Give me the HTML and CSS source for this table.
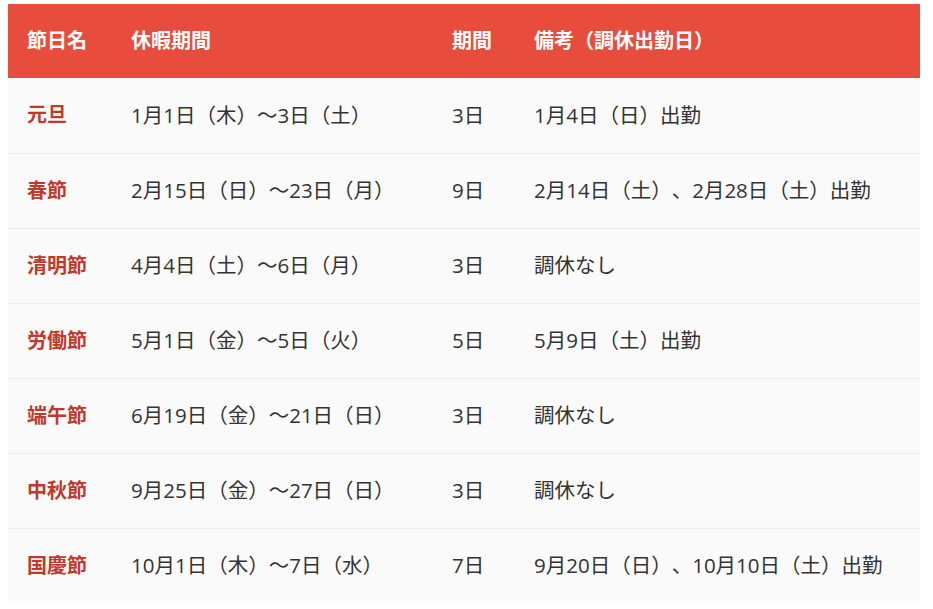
FILE: index.html
```html
<!DOCTYPE html>
<html lang="ja">
<head>
<meta charset="utf-8">
<link rel="stylesheet" href="styles.css">
</head>
<body>
<table class="holidays">
  <colgroup>
    <col class="c-name">
    <col class="c-range">
    <col class="c-days">
    <col class="c-note">
  </colgroup>
  <thead>
    <tr><th>節日名</th><th>休暇期間</th><th>期間</th><th>備考（調休出勤日）</th></tr>
  </thead>
  <tbody>
    <tr><td class="name">元旦</td><td>1月1日（木）～3日（土）</td><td>3日</td><td>1月4日（日）出勤</td></tr>
    <tr><td class="name">春節</td><td>2月15日（日）～23日（月）</td><td>9日</td><td>2月14日（土）、2月28日（土）出勤</td></tr>
    <tr><td class="name">清明節</td><td>4月4日（土）～6日（月）</td><td>3日</td><td>調休なし</td></tr>
    <tr><td class="name">労働節</td><td>5月1日（金）～5日（火）</td><td>5日</td><td>5月9日（土）出勤</td></tr>
    <tr><td class="name">端午節</td><td>6月19日（金）～21日（日）</td><td>3日</td><td>調休なし</td></tr>
    <tr><td class="name">中秋節</td><td>9月25日（金）～27日（日）</td><td>3日</td><td>調休なし</td></tr>
    <tr><td class="name">国慶節</td><td>10月1日（木）～7日（水）</td><td>7日</td><td>9月20日（日）、10月10日（土）出勤</td></tr>
  </tbody>
</table>
</body>
</html>
```
FILE: styles.css
```css
html, body {
  background: #ffffff;
}
body {
  margin: 4px 13px 8px 8px;
  font-family: "Open Sans", "Noto Sans CJK JP", sans-serif;
  color: #333333;
}
.holidays {
  width: 912px;
  border-collapse: collapse;
  table-layout: fixed;
  background: #fafafa;
  box-shadow: 0 2px 6px rgba(0, 0, 0, 0.12);
  font-size: 20px;
  text-spacing-trim: space-all;
}
.c-name { width: 104px; }
.c-range { width: 321px; }
.c-days { width: 82px; }
.c-note { width: auto; }
.holidays th,
.holidays td {
  text-align: left;
  padding: 0 0 0 19px;
  white-space: nowrap;
  line-height: 1.3;
}
.holidays td {
  font-size: 20.5px;
}
.holidays thead tr {
  height: 74px;
  background: #e74c3c;
}
.holidays th {
  color: #ffffff;
  font-weight: 700;
}
.holidays tbody tr {
  height: 75px;
  border-top: 1px solid #ececec;
}
.holidays tbody tr:first-child {
  border-top: none;
}
.holidays td.name {
  color: #c0392b;
  font-weight: 700;
  font-size: 20px;
}
```
